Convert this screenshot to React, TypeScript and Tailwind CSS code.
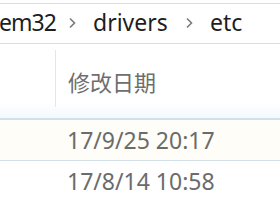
import React from 'react';

const Chevron = () => (
  <svg width="10" height="12" viewBox="0 0 10 12" className="shrink-0">
    <polyline points="2,1.5 6.5,6 2,10.5" fill="none" stroke="#7a7a7a" strokeWidth="1.6" />
  </svg>
);

export default function App() {
  const rows = [
    { date: '17/9/25 20:17', bg: 'bg-[#fefdf8]' },
    { date: '17/8/14 10:58', bg: 'bg-white' },
  ];

  return (
    <div className="w-[280px] h-[210px] overflow-hidden bg-white font-['Noto_Sans','Noto_Sans_CJK_SC',sans-serif]">
      {/* Breadcrumb */}
      <div className="mt-[3px] h-[41px] border-t border-b border-[#dcdcdc] flex items-center text-[23px] leading-none text-[#1e1e1e] pb-[2px]">
        <span className="w-[68px] shrink-0 whitespace-nowrap ml-[-1px] mr-[1px] tracking-[-1px]">em32</span>
        <span className="w-[25px] shrink-0 flex"><Chevron /></span>
        <span className="w-[92px] shrink-0">drivers</span>
        <span className="w-[25px] shrink-0 flex"><Chevron /></span>
        <span>etc</span>
      </div>

      {/* Column header */}
      <div className="h-[74px] flex bg-gradient-to-b from-white from-80% to-[#f2f9fc]">
        <div className="w-[55px] shrink-0" />
        <div className="flex-1 flex pt-[6px] pb-[11px]">
          <div className="w-px bg-[#e6e6e6]" />
          <div className="pl-[12px] flex items-center pt-[4px] text-[22px] leading-none text-[#6e6e6e] font-['Noto_Sans_CJK_SC',sans-serif]">
            修改日期
          </div>
        </div>
      </div>
      <div className="h-[2px] bg-[#cfe1ea]" />

      {/* Rows */}
      {rows.map((r, i) => (
        <div key={i} className={`h-[41px] flex items-center pl-[67px] text-[23px] leading-none text-[#6b6b6b] ${r.bg} ${i === 0 ? 'border-b border-[#d3e0e7]' : ''}`}>
          {r.date}
        </div>
      ))}
    </div>
  );
}
